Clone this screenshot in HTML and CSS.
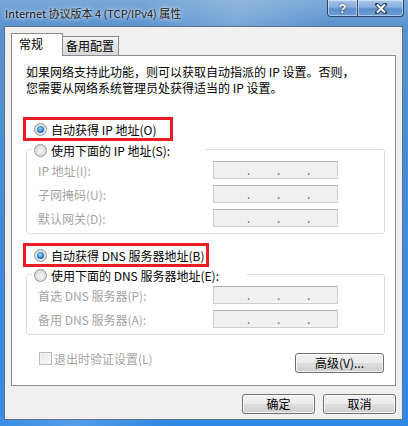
FILE: index.html
```html
<!DOCTYPE html>
<html lang="zh-CN">
<head>
    <meta charset="UTF-8">
    <title>Internet 协议版本 4 (TCP/IPv4) 属性</title>
    <link rel="stylesheet" href="styles.css">
</head>
<body>
    <div class="window">
        <div class="titlebar">
            <span class="title">Internet 协议版本 4 (TCP/IPv4) 属性</span>
            <div class="caption-buttons">
                <span class="cap help">?</span>
                <span class="cap close">
                    <svg width="12" height="11" viewBox="0 0 12 11">
                        <path d="M2 1.5 L10 9.5 M10 1.5 L2 9.5" stroke="#2a3f5c" stroke-width="4" stroke-linecap="square"/>
                        <path d="M2 1.5 L10 9.5 M10 1.5 L2 9.5" stroke="#fff" stroke-width="2"/>
                    </svg>
                </span>
            </div>
        </div>

        <div class="client">
            <div class="tabs">
                <span class="tab active">常规</span>
                <span class="tab">备用配置</span>
            </div>

            <div class="panel">
                <p class="intro">
                    如果网络支持此功能，则可以获取自动指派的 IP 设置。否则，<br>
                    您需要从网络系统管理员处获得适当的 IP 设置。
                </p>

                <div class="option marked ip-auto">
                    <span class="radio checked"></span>
                    <span>自动获得 IP 地址(O)</span>
                </div>

                <div class="group">
                    <div class="group-head ip-head">
                        <span class="radio"></span>
                        <span>使用下面的 IP 地址(S):</span>
                    </div>
                    <div class="group-body">
                        <div class="field-row">
                            <span class="field-label">IP 地址(I):</span>
                            <div class="ip-box"><span>.</span><span>.</span><span>.</span></div>
                        </div>
                        <div class="field-row">
                            <span class="field-label">子网掩码(U):</span>
                            <div class="ip-box"><span>.</span><span>.</span><span>.</span></div>
                        </div>
                        <div class="field-row">
                            <span class="field-label">默认网关(D):</span>
                            <div class="ip-box"><span>.</span><span>.</span><span>.</span></div>
                        </div>
                    </div>
                </div>

                <div class="option marked dns-auto">
                    <span class="radio checked"></span>
                    <span>自动获得 DNS 服务器地址(B)</span>
                </div>

                <div class="group dns-group">
                    <div class="group-head dns-head">
                        <span class="radio"></span>
                        <span>使用下面的 DNS 服务器地址(E):</span>
                    </div>
                    <div class="group-body">
                        <div class="field-row">
                            <span class="field-label">首选 DNS 服务器(P):</span>
                            <div class="ip-box"><span>.</span><span>.</span><span>.</span></div>
                        </div>
                        <div class="field-row">
                            <span class="field-label">备用 DNS 服务器(A):</span>
                            <div class="ip-box"><span>.</span><span>.</span><span>.</span></div>
                        </div>
                    </div>
                </div>

                <div class="panel-footer">
                    <div class="check-option">
                        <span class="checkbox"></span>
                        <span>退出时验证设置(L)</span>
                    </div>
                    <button class="btn advanced">高级(V)...</button>
                </div>
            </div>

            <div class="dialog-buttons">
                <button class="btn">确定</button>
                <button class="btn">取消</button>
            </div>
        </div>
    </div>
</body>
</html>
```

FILE: styles.css
```css
* {
    box-sizing: border-box;
}
body {
    margin: 0;
    font-family: "Noto Sans CJK SC", "Liberation Sans", sans-serif;
    font-size: 12px;
    color: #000;
}
.window {
    width: 408px;
    height: 426px;
    overflow: hidden;
    background:
        linear-gradient(112deg, rgba(255,255,255,0) 25%, rgba(255,255,255,0.18) 42%, rgba(255,255,255,0) 58%),
        linear-gradient(to bottom, #79a8d8 0, #6a9dd3 14px, #5a93cf 26px, #3d8cdc 55%, #2f88e4 100%);
}
.titlebar {
    height: 26px;
    display: flex;
    align-items: flex-start;
}
.title {
    margin: 5px 0 0 5px;
    font-size: 11px;
    line-height: 16px;
    color: #111;
    white-space: nowrap;
    text-shadow: 0 0 5px rgba(255,255,255,0.9), 0 0 2px rgba(255,255,255,0.8);
}
.caption-buttons {
    display: flex;
    margin-left: auto;
    margin-right: 4px;
}
.cap {
    height: 17px;
    display: flex;
    align-items: center;
    justify-content: center;
    border: 1px solid #2c4767;
    border-top: none;
    background: linear-gradient(to bottom, #a9c6e6 0, #86aede 45%, #5f8fc9 55%, #6d9dd6 100%);
    box-shadow: inset 0 0 0 1px rgba(255,255,255,0.45);
}
.cap.help {
    width: 31px;
    border-radius: 0 0 0 4px;
    color: #fff;
    font-family: "Liberation Sans", sans-serif;
    font-weight: bold;
    font-size: 13px;
    text-shadow: 0 0 2px #203550, 0 0 1px #203550;
}
.cap.close {
    width: 46px;
    border-left: none;
    border-radius: 0 0 4px 0;
}

/* okno dialogowe */
.client {
    margin: 0 5px 0 4px;
    height: 394px;
    border: 1px solid #5d6f86;
    background: #f0f0f0;
    padding: 6px 6px 0 6px;
}
.tabs {
    display: flex;
    align-items: flex-end;
    height: 22px;
}
.tab {
    height: 19px;
    width: 57px;
    margin-left: -1px;
    padding: 0 3px;
    line-height: 17px;
    white-space: nowrap;
    border: 1px solid #898c95;
    border-bottom: none;
    background: linear-gradient(to bottom, #f4f4f4, #e4e4e4 50%, #d8d8d8);
}
.tab.active {
    position: relative;
    z-index: 1;
    width: 52px;
    height: 23px;
    margin: 0 0 -1px 0;
    padding-left: 7px;
    line-height: 20px;
    background: #fff;
}
.panel {
    width: 385px;
    height: 331px;
    padding-top: 8px;
    background: #fff;
    border: 1px solid #898c95;
}
.intro {
    margin: 0 0 0 14px;
    line-height: 16px;
}
.option {
    display: flex;
    align-items: center;
    gap: 4px;
    height: 24px;
    padding-left: 8px;
    margin-left: 11px;
}
.marked {
    border: 3px solid #ed1c24;
}
.ip-auto {
    width: 150px;
    margin-top: 21px;
}
.dns-auto {
    width: 186px;
    margin-top: 9px;
}
.radio {
    position: relative;
    flex: none;
    width: 13px;
    height: 13px;
    border-radius: 50%;
    border: 1px solid #949494;
    background: radial-gradient(circle at 50% 55%, #f6f6f6 0, #e2e2e2 55%, #c9c9c9 100%);
}
.radio.checked::after {
    content: "";
    position: absolute;
    left: 2px;
    top: 2px;
    width: 7px;
    height: 7px;
    border-radius: 50%;
    background: radial-gradient(circle at 45% 40%, #9fe0ff 0, #3a8fd6 45%, #125fa8 75%, #0b3f76 100%);
}
.group {
    margin: 8px 10px 0 14px;
    padding: 0 0 6px 11px;
    border: 1px solid #d5dfe5;
    border-radius: 3px;
}
.dns-group {
    margin-top: 7px;
}
.group-head {
    display: flex;
    align-items: center;
    gap: 4px;
    height: 16px;
    margin: -8px 0 0 -6px;
    padding-left: 2px;
    background: #fff;
}
.ip-head {
    width: 174px;
}
.dns-head {
    width: 215px;
}
.group-body {
    display: flex;
    flex-direction: column;
    gap: 6px;
    margin-top: 3px;
}
.field-row {
    display: flex;
    align-items: center;
}
.field-label {
    width: 175px;
    color: #a3a3a3;
}
.ip-box {
    display: flex;
    width: 125px;
    height: 18px;
    padding-left: 33px;
    line-height: 16px;
    color: #6d6d6d;
    background: #f0f0f0;
    border: 1px solid #cfcfcf;
    border-top-color: #adb2b5;
}
.ip-box span {
    width: 31px;
}
.panel-footer {
    display: flex;
    align-items: flex-start;
    justify-content: space-between;
    margin: 17px 11px 0 27px;
}
.check-option {
    display: flex;
    align-items: center;
    gap: 2px;
    height: 13px;
    color: #a3a3a3;
}
.checkbox {
    width: 13px;
    height: 13px;
    border: 1px solid #b9b9b9;
    background: linear-gradient(135deg, #e6e6e6, #fafafa);
    box-shadow: inset 0 0 0 1px #f4f4f4;
}
.btn {
    height: 20px;
    width: 73px;
    padding: 0;
    font: inherit;
    line-height: 18px;
    color: #000;
    border: 1px solid #707070;
    border-radius: 3px;
    background: linear-gradient(to bottom, #f2f2f2 0, #ebebeb 50%, #dddddd 51%, #cfcfcf 100%);
    box-shadow: inset 0 0 0 1px rgba(255,255,255,0.75);
}
.btn.advanced {
    width: 89px;
    margin-top: 1px;
}
.dialog-buttons {
    display: flex;
    justify-content: flex-end;
    gap: 8px;
    margin-top: 8px;
}
```
